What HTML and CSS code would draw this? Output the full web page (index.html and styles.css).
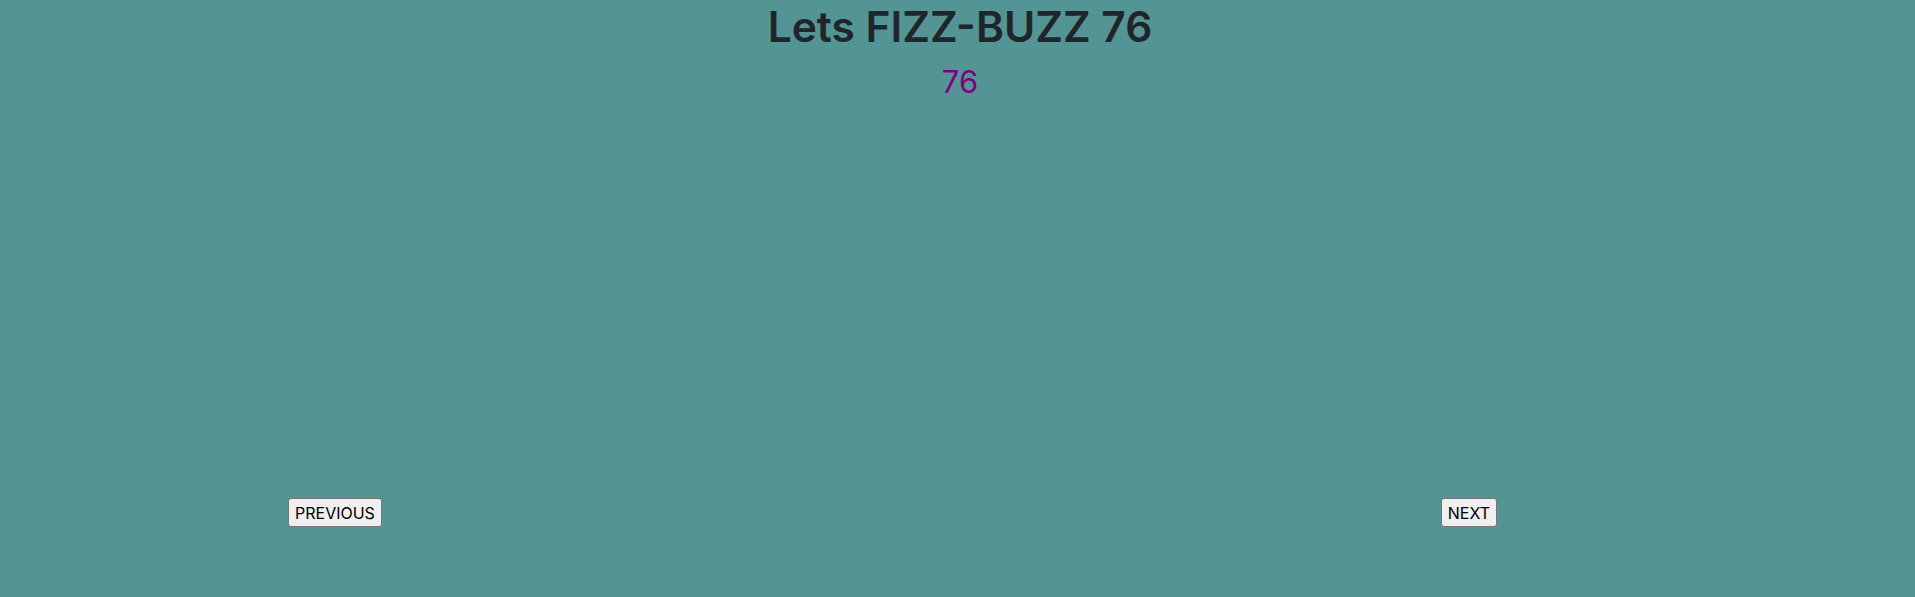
FILE: index.html
```html
<!DOCTYPE html>
<html>
<head>
<meta charset="utf-8">
<link rel="stylesheet" href="styles.css">
</head>
<body>
<div class="app">
  <h1 class="title">Lets FIZZ-BUZZ 76</h1>
  <div class="value">76</div>
  <div class="controls">
    <button class="btn">PREVIOUS</button>
    <button class="btn">NEXT</button>
  </div>
</div>
</body>
</html>
```
FILE: styles.css
```css
html, body {
  margin: 0;
  padding: 0;
  background: #539594;
  height: 100%;
}
body {
  font-family: Inter, "Noto Sans", sans-serif;
  color: #212529;
}
.app {
  display: flex;
  flex-direction: column;
  align-items: center;
  padding-left: 5px;
}
.title {
  margin: 0;
  font-size: 42.5px;
  font-weight: 600;
  line-height: 54px;
  color: #212529;
}
.value {
  margin-top: 10px;
  font-size: 31px;
  line-height: 36px;
  color: #800080;
}
.controls {
  align-self: stretch;
  display: flex;
  justify-content: space-between;
  margin: 398px 418px 0 283px;
}
.btn {
  font-family: Inter, "Noto Sans", sans-serif;
  font-size: 16px;
  height: 29px;
  padding: 0 6px;
  background: #efefef;
  color: #000;
  border: 1px solid #767676;
  border-radius: 3px;
}
```
